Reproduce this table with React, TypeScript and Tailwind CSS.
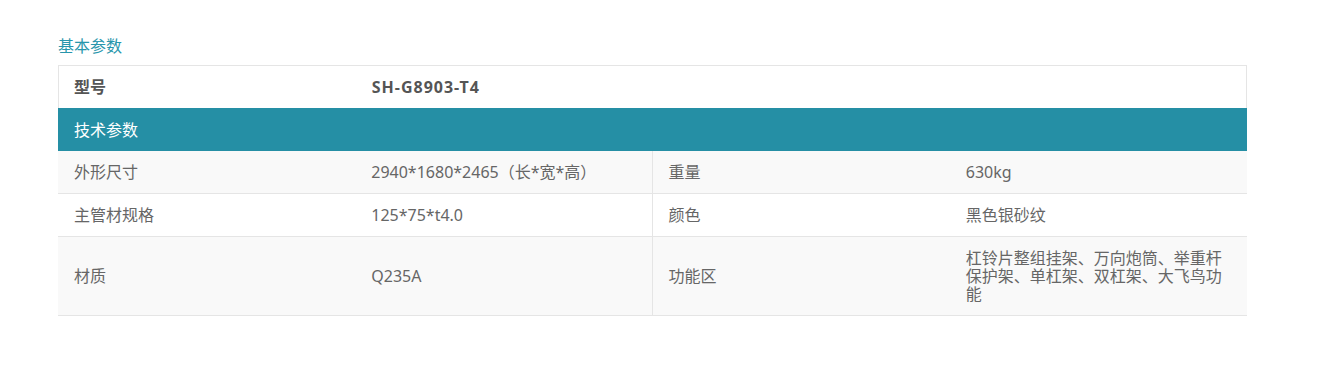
const specs = [
  { k1: "外形尺寸", v1: "2940*1680*2465（长*宽*高）", k2: "重量", v2: "630kg", bg: "bg-[#f9f9f9]" },
  { k1: "主管材规格", v1: "125*75*t4.0", k2: "颜色", v2: "黑色银砂纹", bg: "bg-white" },
  {
    k1: "材质",
    v1: "Q235A",
    k2: "功能区",
    v2: "杠铃片整组挂架、万向炮筒、举重杆保护架、单杠架、双杠架、大飞鸟功能",
    bg: "bg-[#f9f9f9]",
  },
];

export default function App() {
  return (
    <div
      className="min-h-[375px] bg-white pl-[58px] pt-[36px] text-[16px] leading-[18px] text-[#666]"
      style={{ fontFamily: '"Noto Sans", "Noto Sans CJK SC", sans-serif' }}
    >
      <h3 className="mb-[9px] text-[16px] leading-[20px] text-[#2896ac]">基本参数</h3>

      <div className="w-[1189px]">
        {/* 型号 */}
        <div className="grid grid-cols-4 border border-b-0 border-[#e5e5e5] bg-white font-bold text-[#555]">
          <div className="px-[15px] py-[12px]">型号</div>
          <div className="col-span-3 px-[16px] py-[12px] tracking-[1px]">SH-G8903-T4</div>
        </div>

        {/* 分组标题 */}
        <div className="flex h-[43px] items-center bg-[#258fa5] px-[16px] text-white">技术参数</div>

        {specs.map((row) => (
          <div key={row.k1} className={`grid grid-cols-4 border-b border-[#e5e5e5] ${row.bg}`}>
            <div className="flex items-center px-[16px] py-[12px]">{row.k1}</div>
            <div className="flex items-center border-r border-[#e5e5e5] px-[16px] py-[12px]">{row.v1}</div>
            <div className="flex items-center px-[16px] py-[12px]">{row.k2}</div>
            <div className="flex items-center py-[12px] pl-[16px] pr-[20px]">{row.v2}</div>
          </div>
        ))}
      </div>
    </div>
  );
}
